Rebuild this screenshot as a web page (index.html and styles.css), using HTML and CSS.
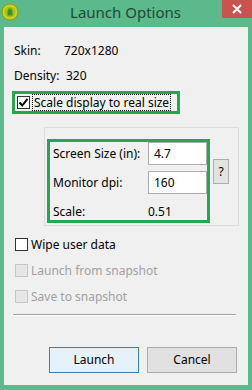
FILE: index.html
```html
<!DOCTYPE html>
<html lang="en">

<head>
  <meta charset="UTF-8">
  <title>Launch Options</title>
  <link rel="stylesheet" href="styles.css">
</head>

<body>
  <div class="window">

    <div class="titlebar">
      <svg class="app-icon" width="18" height="18" viewBox="0 0 18 18">
        <circle cx="9" cy="9" r="8" fill="#c9d51d" stroke="#8f9a12" stroke-width="1" />
        <circle cx="9" cy="9" r="5.5" fill="#a8c21a" />
        <path d="M6.5 8.5 a2.5 2.5 0 0 1 5 0 v4 h-5 z" fill="#3f8f2a" />
        <rect x="7.6" y="5" width="0.8" height="1.6" fill="#3f8f2a" />
        <rect x="9.6" y="5" width="0.8" height="1.6" fill="#3f8f2a" />
      </svg>
      <span class="title">Launch Options</span>
      <span class="close">
        <svg width="10" height="10" viewBox="0 0 10 10">
          <path d="M1 1 L9 9 M9 1 L1 9" stroke="#fff" stroke-width="2" />
        </svg>
      </span>
    </div>

    <div class="client">
      <div class="info-row"><span class="info-label">Skin:</span><span>720x1280</span></div>
      <div class="info-row"><span class="density-label">Density:</span><span>320</span></div>

      <div class="mark scale-mark">
        <span class="check checked">
          <svg width="11" height="11" viewBox="0 0 11 11">
            <path d="M1.5 5.5 L4.3 8.5 L9.5 1.8" stroke="#000" stroke-width="2" fill="none" />
          </svg>
        </span>
        <span class="focus-text">Scale display to real size</span>
      </div>

      <div class="group">
        <div class="mark fields">
          <span class="field-label">Screen Size (in):</span>
          <span class="text-input">4.7</span>
          <span class="field-label">Monitor dpi:</span>
          <span class="text-input">160</span>
          <span class="field-label scale-label">Scale:</span>
          <span class="scale-label">0.51</span>
        </div>
        <span class="help-btn">?</span>
      </div>

      <div class="option">
        <span class="check"></span>
        <span>Wipe user data</span>
      </div>
      <div class="option disabled">
        <span class="check"></span>
        <span>Launch from snapshot</span>
      </div>
      <div class="option disabled">
        <span class="check"></span>
        <span>Save to snapshot</span>
      </div>

      <div class="separator"></div>

      <div class="buttons">
        <span class="btn default">Launch</span>
        <span class="btn">Cancel</span>
      </div>
    </div>

  </div>
</body>

</html>
```

FILE: styles.css
```css
* {
  margin: 0;
  padding: 0;
  box-sizing: border-box;
}

body {
  font-family: "Noto Sans", "Noto Sans CJK SC", sans-serif;
  font-size: 12px;
  color: #000;
  width: 252px;
  height: 390px;
  overflow: hidden;
}

.window {
  width: 252px;
  height: 390px;
  background: #5cb98b;
  padding: 0 4px 5px 4px;
  display: flex;
  flex-direction: column;
}

/* title bar */

.titlebar {
  height: 27px;
  display: flex;
  align-items: flex-start;
  position: relative;
}

.app-icon {
  margin-top: 3px;
  margin-left: -3px;
}

.title {
  flex: 1;
  text-align: center;
  font-size: 15px;
  line-height: 24px;
  color: #1c4a37;
  padding-left: 10px;
}

.close {
  width: 30px;
  height: 18px;
  margin-right: -4px;
  background: #c85451;
  display: flex;
  align-items: center;
  justify-content: center;
}

/* client area */

.client {
  flex: 1;
  background: #f0f0f0;
  padding: 11px 10px 0 10px;
  display: flex;
  flex-direction: column;
}

.info-row {
  height: 25px;
  display: flex;
  align-items: center;
}

.info-label {
  width: 50px;
}

.density-label {
  width: 52px;
}

.mark {
  border: 3px solid #22a94e;
}

.scale-mark {
  margin: 3px 0 0 -2px;
  width: 168px;
  height: 23px;
  display: flex;
  align-items: center;
  padding-left: 2px;
}

.check {
  width: 13px;
  height: 13px;
  border: 1px solid #333;
  background: #fff;
  display: inline-flex;
  align-items: center;
  justify-content: center;
  flex-shrink: 0;
}

.focus-text {
  margin-left: 2px;
  border: 1px dotted #000;
  padding: 0 1px;
  line-height: 15px;
}

/* dpi group */

.group {
  margin: 13px 0 0 30px;
  width: 195px;
  height: 99px;
  border: 1px solid #dcdcdc;
  display: flex;
  align-items: flex-start;
}

.fields {
  margin: 11px 0 0 2px;
  width: 163px;
  height: 84px;
  display: grid;
  grid-template-columns: 95px 59px;
  grid-template-rows: 23px 23px 20px;
  row-gap: 6px;
  align-items: center;
  padding-left: 3px;
}

.text-input {
  height: 23px;
  background: #fff;
  border: 1px solid #acacac;
  padding-left: 5px;
  line-height: 21px;
}

.scale-label {
  margin-top: 3px;
}

.help-btn {
  margin: 31px 0 0 3px;
  width: 16px;
  height: 25px;
  border: 1px solid #adadad;
  background: #e3e3e3;
  text-align: center;
  line-height: 23px;
}

/* options */

.option {
  height: 26px;
  display: flex;
  align-items: center;
  gap: 3px;
  padding-left: 1px;
}

.option:first-of-type,
.group + .option {
  margin-top: 5px;
}

.disabled {
  color: #a0a0a0;
}

.disabled .check {
  border-color: #c6c6c6;
  background: #e6e6e6;
}

.separator {
  margin: 5px 2px 0 -1px;
  height: 2px;
  border-top: 1px solid #a0a0a0;
  border-bottom: 1px solid #fff;
}

.buttons {
  margin: 31px 0 0 35px;
  display: flex;
  gap: 8px;
}

.btn {
  width: 90px;
  height: 26px;
  border: 1px solid #adadad;
  background: #e1e1e1;
  text-align: center;
  line-height: 24px;
}

.btn.default {
  border-color: #3c7fb1;
  background: #e5f1fb;
}
```
